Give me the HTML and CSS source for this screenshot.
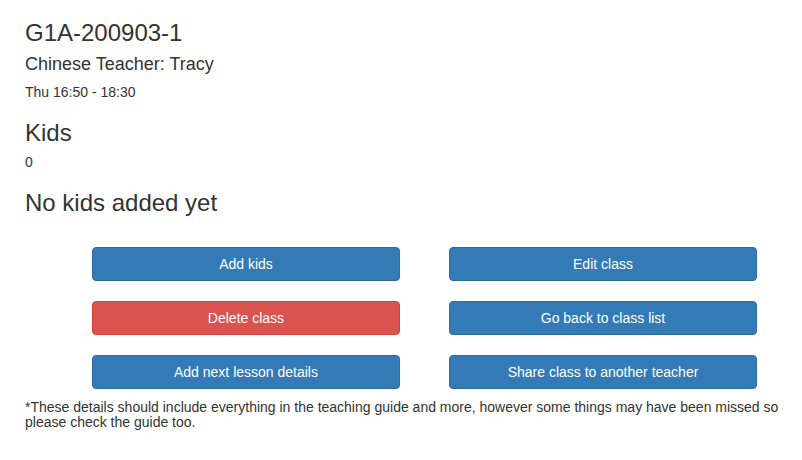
FILE: index.html
```html
<!DOCTYPE html>
<html>
<head>
<meta charset="utf-8">
<link rel="stylesheet" href="styles.css">
</head>
<body>
<div class="page">
  <h1 class="title">G1A-200903-1</h1>
  <h4 class="teacher">Chinese Teacher: Tracy</h4>
  <p class="time">Thu 16:50 - 18:30</p>
  <h2 class="section">Kids</h2>
  <p class="count">0</p>
  <h2 class="empty">No kids added yet</h2>
  <div class="actions">
    <button class="btn btn-primary">Add kids</button>
    <button class="btn btn-primary">Edit class</button>
    <button class="btn btn-danger">Delete class</button>
    <button class="btn btn-primary">Go back to class list</button>
    <button class="btn btn-primary">Add next lesson details</button>
    <button class="btn btn-primary">Share class to another teacher</button>
  </div>
  <p class="note">*These details should include everything in the teaching guide and more, however some things may have been missed so please check the guide too.</p>
</div>
</body>
</html>
```

FILE: styles.css
```css
html, body {
  margin: 0;
  padding: 0;
  background: #fff;
}
body {
  font-family: "Liberation Sans", Arial, sans-serif;
  font-size: 14px;
  line-height: 20px;
  color: #333;
}
.page {
  padding: 0 15px 0 25px;
}
.title, .section, .empty {
  font-size: 24px;
  line-height: 26px;
  font-weight: 500;
  margin: 0;
}
.title {
  padding-top: 20px;
}
.teacher {
  font-size: 18px;
  line-height: 20px;
  font-weight: 500;
  margin: 8px 0 0;
}
.time {
  margin: 8px 0 0;
}
.section {
  margin-top: 18px;
}
.count {
  margin: 6px 0 0;
}
.empty {
  margin-top: 18px;
}
.actions {
  display: grid;
  grid-template-columns: 308px 308px;
  column-gap: 49px;
  row-gap: 20px;
  margin: 31px 0 0 67px;
}
.btn {
  height: 34px;
  border-radius: 4px;
  border: 1px solid;
  color: #fff;
  font-family: "Liberation Sans", Arial, sans-serif;
  font-size: 14px;
  padding: 0 12px;
  cursor: pointer;
}
.btn-primary {
  background: #337ab7;
  border-color: #2e6da4;
}
.btn-danger {
  background: #d9534f;
  border-color: #d43f3a;
}
.note {
  margin: 11px 0 0;
  line-height: 15px;
}
```
